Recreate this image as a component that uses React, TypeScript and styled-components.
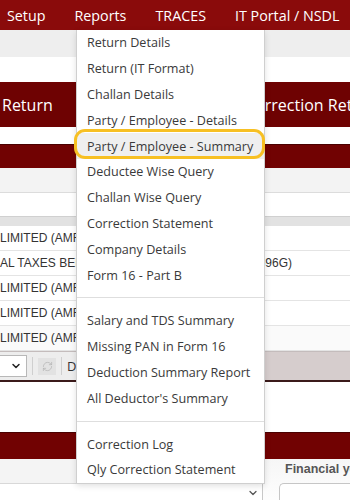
import styled, { createGlobalStyle } from "styled-components";
import { ChevronDown, RefreshCw } from "lucide-react";

const GlobalStyle = createGlobalStyle`
  html, body {
    margin: 0;
    padding: 0;
    background: #fff;
  }
`;

const Page = styled.div`
  position: relative;
  width: 350px;
  height: 500px;
  overflow: hidden;
  background: #fff;
  font-family: "Open Sans", "Noto Sans", sans-serif;
`;

const NavBar = styled.div`
  display: flex;
  align-items: center;
  gap: 29px;
  height: 30px;
  padding-left: 7px;
  background: #8a0b0b;
  white-space: nowrap;
`;

const NavItem = styled.span`
  color: #fff;
  font-size: 14.3px;
`;

const SubBar = styled.div`
  height: 27px;
  background: #eeeeee;
`;

const Gap = styled.div<{ $h: number; $bg?: string }>`
  height: ${(p) => p.$h}px;
  background: ${(p) => p.$bg ?? "#fff"};
`;

const TabHeader = styled.div`
  display: grid;
  grid-template-columns: 245px 1fr;
  align-items: center;
  height: 45px;
  background: #6e0202;
  color: #fff;
  font-size: 16px;
  white-space: nowrap;
  overflow: hidden;
`;

const TabTitle = styled.span<{ $pad: number }>`
  padding-left: ${(p) => p.$pad}px;
`;

const SectionBar = styled.div<{ $h: number }>`
  height: ${(p) => p.$h}px;
  background: #710202;
  border-top: 1px solid #4a0000;
`;

const FilterRow = styled.div`
  height: 24px;
  background: #f3f3f3;
  border-bottom: 1px solid #dcdcdc;
`;

const TableHead = styled.div`
  height: 9px;
  background: #e2e2e2;
  border-top: 1px solid #d0d0d0;
`;

const Row = styled.div<{ $shade?: boolean }>`
  display: flex;
  align-items: center;
  height: 24px;
  border-bottom: 1px solid #e4e4e4;
  background: ${(p) => (p.$shade ? "#fafafa" : "#fff")};
  font-family: "Liberation Sans", Arial, sans-serif;
  font-size: 12px;
  color: #333;
  white-space: nowrap;
`;

const Cell = styled.div<{ $w: number }>`
  width: ${(p) => p.$w}px;
  flex: 0 0 auto;
  overflow: hidden;
`;

const Pager = styled.div`
  display: flex;
  align-items: center;
  height: 28px;
  background: #d6cdcd;
  border-top: 1px solid #c4bcbc;
  border-bottom: 2px solid #3b1a1a;
`;

const PagerLeft = styled.div`
  display: flex;
  align-items: center;
  gap: 5px;
  height: 100%;
  width: 264px;
  background: #ededed;
`;

const SizeSelect = styled.div`
  display: flex;
  align-items: center;
  justify-content: flex-end;
  width: 22px;
  height: 20px;
  padding-right: 4px;
  background: #fff;
  border: 1px solid #b8b8b8;
  border-left: none;
  color: #222;
`;

const Divider = styled.span`
  width: 1px;
  height: 18px;
  background: #cfcfcf;
`;

const IconButton = styled.span`
  display: flex;
  align-items: center;
  justify-content: center;
  width: 18px;
  height: 17px;
  background: #e2e2e2;
  color: #b4b4b4;
`;

const PagerText = styled.span`
  font-size: 13px;
  color: #333;
`;

const BottomArea = styled.div`
  display: grid;
  grid-template-columns: 263px 1fr;
`;

const BottomLeft = styled.div`
  display: flex;
  flex-direction: column;
`;

const LightBand = styled.div`
  height: 24px;
  background: #f4f4f4;
  border-bottom: 1px solid #d8d8d8;
`;

const SelectBox = styled.div`
  display: flex;
  align-items: center;
  justify-content: flex-end;
  height: 18px;
  padding-right: 3px;
  background: #fff;
  border-right: 1px solid #c8c8c8;
  color: #555;
`;

const BottomRight = styled.div`
  display: flex;
  flex-direction: column;
  padding-top: 3px;
  background: linear-gradient(#f6f6f6, #ffffff);
`;

const FieldLabel = styled.span`
  padding-left: 22px;
  height: 21px;
  font-family: "Liberation Sans", Arial, sans-serif;
  font-weight: bold;
  font-size: 12.5px;
  color: #555;
  white-space: nowrap;
`;

const FieldInput = styled.div`
  margin-left: 16px;
  height: 24px;
  background: #fff;
  border: 1px solid #c6c6c6;
  border-right: none;
  border-radius: 5px 0 0 0;
`;

const Menu = styled.div`
  position: absolute;
  left: 76px;
  top: 30px;
  width: 187px;
  background: #fff;
  border: 1px solid #cfcfcf;
  border-top: none;
  box-shadow: 0 2px 6px rgba(0, 0, 0, 0.12);
`;

const MenuItem = styled.div<{ $active?: boolean }>`
  position: relative;
  display: flex;
  align-items: center;
  height: 25.8px;
  padding-left: 10px;
  font-size: 12.6px;
  color: #3a3a3a;
  white-space: nowrap;
  background: ${(p) => (p.$active ? "#efefef" : "transparent")};
`;

const Highlight = styled.span`
  position: absolute;
  left: -3px;
  right: -1px;
  top: -4px;
  bottom: 0;
  border: 3.5px solid #f7c023;
  border-radius: 11px;
`;

const MenuSeparator = styled.div`
  height: 20px;
  display: flex;
  align-items: center;
  &::after {
    content: "";
    flex: 1;
    height: 1px;
    background: #dedede;
  }
`;

const groups: string[][] = [
  [
    "Return Details",
    "Return (IT Format)",
    "Challan Details",
    "Party / Employee - Details",
    "Party / Employee - Summary",
    "Deductee Wise Query",
    "Challan Wise Query",
    "Correction Statement",
    "Company Details",
    "Form 16 - Part B",
  ],
  [
    "Salary and TDS Summary",
    "Missing PAN in Form 16",
    "Deduction Summary Report",
    "All Deductor's Summary",
  ],
  ["Correction Log", "Qly Correction Statement"],
];

const rows = [
  { name: "LIMITED (AMFI)", tan: "" },
  { name: "AL TAXES BENGALURU", tan: "A8596G)" },
  { name: "LIMITED (AMFI)", tan: "" },
  { name: "LIMITED (AMFI)", tan: "" },
  { name: "LIMITED (AMFI)", tan: "" },
];

export default function App() {
  return (
    <Page>
      <GlobalStyle />
      <NavBar>
        <NavItem>Setup</NavItem>
        <NavItem>Reports</NavItem>
        <NavItem>TRACES</NavItem>
        <NavItem>IT Portal / NSDL</NavItem>
      </NavBar>
      <SubBar />
      <Gap $h={25} />
      <TabHeader>
        <TabTitle $pad={2}>Return</TabTitle>
        <TabTitle $pad={0}>Correction Return</TabTitle>
      </TabHeader>
      <Gap $h={17} />
      <SectionBar $h={23} />
      <FilterRow />
      <Gap $h={23} />
      <TableHead />
      {rows.map((r, i) => (
        <Row key={i} $shade={i === 4}>
          <Cell $w={244}>{r.name}</Cell>
          <Cell $w={60}>{r.tan}</Cell>
        </Row>
      ))}
      <Pager>
        <PagerLeft>
          <SizeSelect>
            <ChevronDown size={12} strokeWidth={3} />
          </SizeSelect>
          <Divider />
          <IconButton>
            <RefreshCw size={11} strokeWidth={1.6} />
          </IconButton>
          <Divider />
          <PagerText>Displaying</PagerText>
        </PagerLeft>
      </Pager>
      <Gap $h={50} />
      <SectionBar $h={26} />
      <BottomArea>
        <BottomLeft>
          <LightBand />
          <SelectBox>
            <ChevronDown size={12} strokeWidth={2.5} />
          </SelectBox>
        </BottomLeft>
        <BottomRight>
          <FieldLabel>Financial year</FieldLabel>
          <FieldInput />
        </BottomRight>
      </BottomArea>

      <Menu>
        {groups.map((g, gi) => (
          <div key={gi}>
            {gi > 0 && <MenuSeparator />}
            {g.map((label) => {
              const active = label === "Party / Employee - Summary";
              return (
                <MenuItem key={label} $active={active}>
                  {label}
                  {active && <Highlight />}
                </MenuItem>
              );
            })}
          </div>
        ))}
      </Menu>
    </Page>
  );
}
